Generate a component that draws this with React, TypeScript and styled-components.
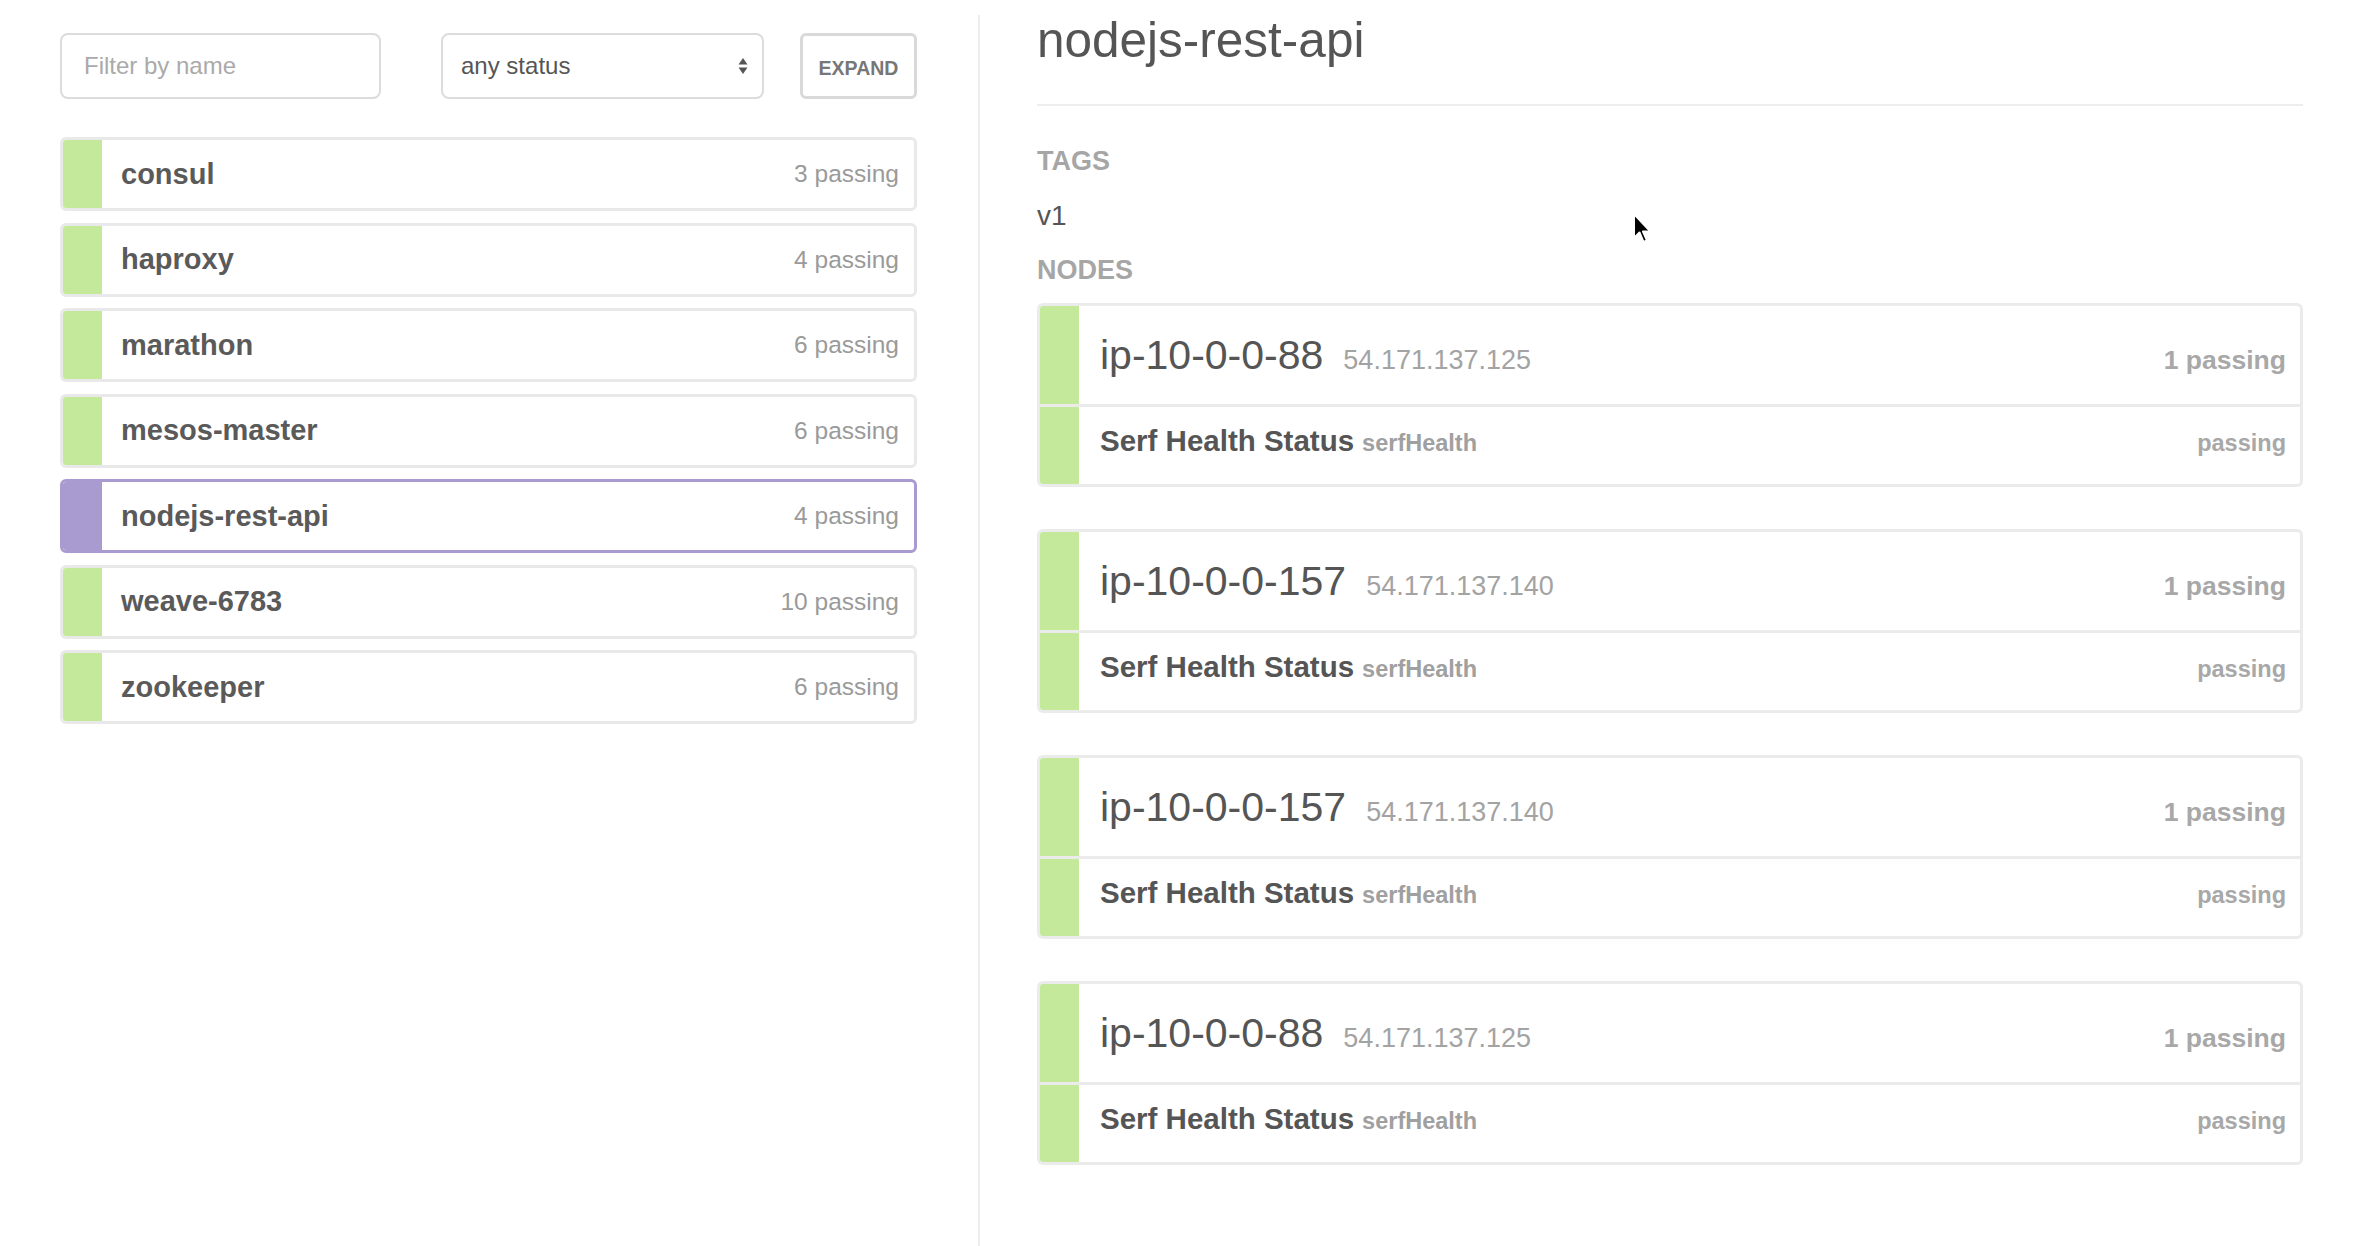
import React from "react";
import styled, { createGlobalStyle } from "styled-components";

const services = [
  { name: "consul", passing: 3 },
  { name: "haproxy", passing: 4 },
  { name: "marathon", passing: 6 },
  { name: "mesos-master", passing: 6 },
  { name: "nodejs-rest-api", passing: 4 },
  { name: "weave-6783", passing: 10 },
  { name: "zookeeper", passing: 6 },
];

const nodes = [
  { name: "ip-10-0-0-88", address: "54.171.137.125" },
  { name: "ip-10-0-0-157", address: "54.171.137.140" },
  { name: "ip-10-0-0-157", address: "54.171.137.140" },
  { name: "ip-10-0-0-88", address: "54.171.137.125" },
];

const GREEN = "#c5e99b";
const PURPLE = "#a99bd0";

const GlobalStyle = createGlobalStyle`
  html, body {
    margin: 0;
    padding: 0;
    background: #fff;
  }
  body {
    font-family: "Liberation Sans", Arial, Helvetica, sans-serif;
    color: #5a5a5a;
  }
  * {
    box-sizing: border-box;
  }
`;

const Page = styled.div`
  position: relative;
  display: flex;
  min-height: 1246px;
`;

const LeftPane = styled.div`
  width: 980px;
  flex: none;
  margin-top: 15px;
  padding: 18px 61px 0 60px;
  border-right: 2px solid #eeeeee;
`;

const Toolbar = styled.div`
  display: flex;
  height: 66px;
`;

const FilterInput = styled.input`
  width: 321px;
  height: 100%;
  padding: 0 22px;
  border: 2px solid #dcdcdc;
  border-radius: 8px;
  font-family: inherit;
  font-size: 24px;
  color: #555;
  outline: none;

  &::placeholder {
    color: #aaaaaa;
  }
`;

const SelectBox = styled.div`
  display: flex;
  align-items: center;
  width: 323px;
  height: 100%;
  margin-left: 60px;
  padding: 0 14px 0 18px;
  border: 2px solid #dcdcdc;
  border-radius: 8px;
  font-size: 24px;
  color: #555;

  > span {
    flex: 1;
  }
`;

const ExpandButton = styled.button`
  width: 117px;
  height: 100%;
  margin-left: auto;
  padding: 4px 0 0;
  border: 3px solid #d9d9d9;
  border-radius: 6px;
  background: #fff;
  font-family: inherit;
  font-size: 19.5px;
  font-weight: 700;
  color: #777;
  cursor: pointer;
`;

const ServiceList = styled.div`
  display: flex;
  flex-direction: column;
  gap: 11.5px;
  margin-top: 38px;
`;

const ServiceRow = styled.div<{ $selected?: boolean }>`
  display: flex;
  align-items: center;
  height: 74px;
  border: 3px solid ${(p) => (p.$selected ? PURPLE : "#e9e9e9")};
  border-radius: 6px;
  overflow: hidden;
  background: #fff;
`;

const StatusBar = styled.div<{ $color: string }>`
  align-self: stretch;
  width: 39px;
  flex: none;
  background: ${(p) => p.$color};
`;

const ServiceName = styled.div`
  padding-left: 19px;
  font-size: 29px;
  font-weight: 700;
  color: #5a5a5a;
`;

const ServiceCount = styled.div`
  margin-left: auto;
  padding-right: 15px;
  font-size: 24.5px;
  color: #9a9a9a;
`;

const RightPane = styled.div`
  flex: 1;
  padding: 12px 59px 40px 57px;
`;

const Title = styled.h1`
  margin: 0;
  padding-bottom: 36px;
  border-bottom: 2px solid #eeeeee;
  font-size: 49.5px;
  line-height: 56px;
  font-weight: 400;
  color: #555;
`;

const SectionLabel = styled.div`
  font-size: 27px;
  line-height: 32px;
  font-weight: 700;
  color: #a6a6a6;
`;

const TagsLabel = styled(SectionLabel)`
  margin-top: 39px;
`;

const NodesLabel = styled(SectionLabel)`
  margin-top: 22px;
`;

const Tag = styled.div`
  margin-top: 23px;
  font-size: 28px;
  line-height: 32px;
  color: #555;
`;

const NodeList = styled.div`
  display: flex;
  flex-direction: column;
  gap: 42px;
  margin-top: 17px;
`;

const NodeCard = styled.div`
  border: 3px solid #ebebeb;
  border-radius: 6px;
  overflow: hidden;
`;

const CardRow = styled.div<{ $check?: boolean }>`
  display: flex;
  height: ${(p) => (p.$check ? "80px" : "98px")};
  border-top: ${(p) => (p.$check ? "3px solid #ebebeb" : "none")};
`;

const RowBody = styled.div<{ $check?: boolean }>`
  flex: 1;
  display: flex;
  align-items: baseline;
  align-self: center;
  padding: 0 14px ${(p) => (p.$check ? "10px" : "0")} 21px;
`;

const NodeName = styled.span`
  font-size: 41px;
  color: #555;
`;

const NodeAddress = styled.span`
  margin-left: 20px;
  font-size: 27px;
  color: #a3a3a3;
`;

const CheckName = styled.span`
  font-size: 29.5px;
  font-weight: 700;
  color: #555;
`;

const CheckId = styled.span`
  margin-left: 8px;
  font-size: 23.5px;
  font-weight: 700;
  color: #a0a0a0;
`;

const Passing = styled.span<{ $small?: boolean }>`
  margin-left: auto;
  font-size: ${(p) => (p.$small ? "23.5px" : "26.5px")};
  font-weight: 700;
  color: #a8a8a8;
`;

const Cursor = styled.svg`
  position: absolute;
  left: 1632px;
  top: 212px;
  pointer-events: none;
`;

const SelectArrows = () => (
  <svg width="10" height="18" viewBox="0 0 10 18">
    <path d="M5 1 L9.5 7.5 H0.5 Z" fill="#555" />
    <path d="M5 17 L9.5 10.5 H0.5 Z" fill="#555" />
  </svg>
);

export default function App() {
  return (
    <>
      <GlobalStyle />
      <Page>
        <LeftPane>
          <Toolbar>
            <FilterInput placeholder="Filter by name" />
            <SelectBox>
              <span>any status</span>
              <SelectArrows />
            </SelectBox>
            <ExpandButton>EXPAND</ExpandButton>
          </Toolbar>
          <ServiceList>
            {services.map((s) => {
              const selected = s.name === "nodejs-rest-api";
              return (
                <ServiceRow key={s.name} $selected={selected}>
                  <StatusBar $color={selected ? PURPLE : GREEN} />
                  <ServiceName>{s.name}</ServiceName>
                  <ServiceCount>{s.passing} passing</ServiceCount>
                </ServiceRow>
              );
            })}
          </ServiceList>
        </LeftPane>

        <RightPane>
          <Title>nodejs-rest-api</Title>
          <TagsLabel>TAGS</TagsLabel>
          <Tag>v1</Tag>
          <NodesLabel>NODES</NodesLabel>
          <NodeList>
            {nodes.map((n, i) => (
              <NodeCard key={i}>
                <CardRow>
                  <StatusBar $color={GREEN} />
                  <RowBody>
                    <NodeName>{n.name}</NodeName>
                    <NodeAddress>{n.address}</NodeAddress>
                    <Passing>1 passing</Passing>
                  </RowBody>
                </CardRow>
                <CardRow $check>
                  <StatusBar $color={GREEN} />
                  <RowBody $check>
                    <CheckName>Serf Health Status</CheckName>
                    <CheckId>serfHealth</CheckId>
                    <Passing $small>passing</Passing>
                  </RowBody>
                </CardRow>
              </NodeCard>
            ))}
          </NodeList>
        </RightPane>

        <Cursor width="22" height="34" viewBox="0 0 22 34">
          <path
            d="M2 2 L2 26 L7.5 20.5 L11.5 30 L15 28.5 L11 19.5 L18.5 19.5 Z"
            fill="#000"
            stroke="#fff"
            strokeWidth="2"
            strokeLinejoin="round"
          />
        </Cursor>
      </Page>
    </>
  );
}
